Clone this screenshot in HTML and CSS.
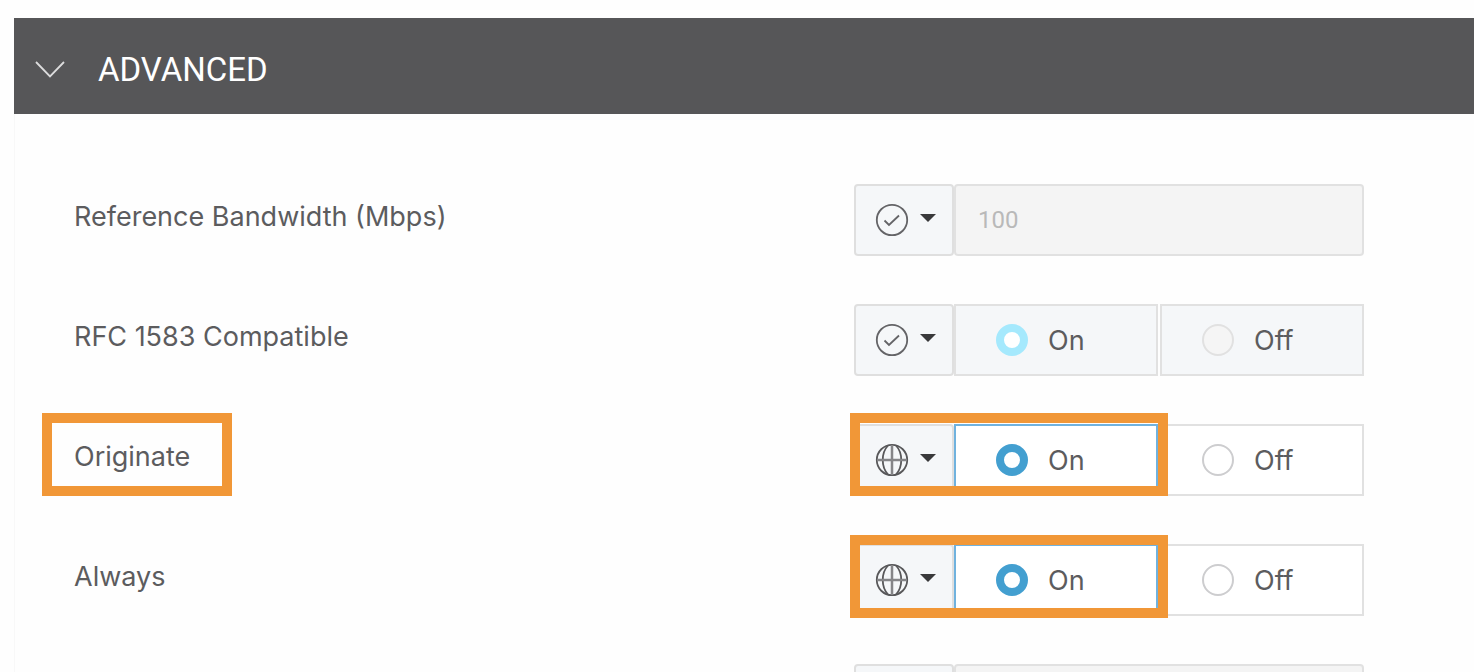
FILE: index.html
```html
<!DOCTYPE html>
<html lang="en">
<head>
<meta charset="utf-8">
<title>Advanced</title>
<link rel="stylesheet" href="styles.css">
</head>
<body>
<svg class="sprite" aria-hidden="true">
  <symbol id="check" viewBox="0 0 34 34">
    <circle cx="17" cy="17" r="15.200" fill="none" stroke="#646467" stroke-width="1.800"/>
    <path d="M9.500 17.500l4.500 4.500L24 12.500" fill="none" stroke="#646467" stroke-width="1.800"/>
  </symbol>
  <symbol id="globe" viewBox="0 0 34 34">
    <g fill="none" stroke="#58585a" stroke-width="1.800">
      <circle cx="17" cy="17" r="15.200"/>
      <path d="M13 2.500C6 10 6 24 13 31.500M21 2.500c7 7.500 7 21.500 0 29"/>
      <path d="M17 2v30M2 17h30" stroke="#858588" stroke-width="2.500"/>
    </g>
  </symbol>
  <symbol id="caret" viewBox="0 0 16 8">
    <path d="M0 0h16L8 8z" fill="#39393b"/>
  </symbol>
</svg>
<section class="panel">
  <header class="panel-header">
    <button class="toggle" type="button" aria-expanded="true">
      <svg class="chevron" viewBox="0 0 30 18"><path d="M1 2l14 14.500L29 2" fill="none" stroke="#dcdcdd" stroke-width="1.800"/></svg>
      <span>ADVANCED</span>
    </button>
  </header>
  <form class="rows">
    <div class="row">
      <div class="name"><label for="bandwidth">Reference Bandwidth (Mbps)</label></div>
      <div class="control">
        <button class="scope" type="button" aria-label="Default"><svg class="icon"><use href="#check"/></svg><svg class="caret"><use href="#caret"/></svg></button>
        <input class="field" id="bandwidth" type="text" value="100" disabled>
      </div>
    </div>
    <div class="row">
      <div class="name"><span id="rfc">RFC 1583 Compatible</span></div>
      <div class="control">
        <button class="scope" type="button" aria-label="Default"><svg class="icon"><use href="#check"/></svg><svg class="caret"><use href="#caret"/></svg></button>
        <div class="options" role="radiogroup" aria-labelledby="rfc">
          <label class="option disabled"><input type="radio" name="rfc" checked disabled>On</label>
          <label class="option disabled"><input type="radio" name="rfc" disabled>Off</label>
        </div>
      </div>
    </div>
    <div class="row">
      <div class="name"><span id="originate" class="marked">Originate</span></div>
      <div class="control marked-control">
        <button class="scope" type="button" aria-label="Global"><svg class="icon"><use href="#globe"/></svg><svg class="caret"><use href="#caret"/></svg></button>
        <div class="options" role="radiogroup" aria-labelledby="originate">
          <label class="option selected"><input type="radio" name="originate" checked>On</label>
          <label class="option"><input type="radio" name="originate">Off</label>
        </div>
      </div>
    </div>
    <div class="row">
      <div class="name"><span id="always">Always</span></div>
      <div class="control marked-control low">
        <button class="scope" type="button" aria-label="Global"><svg class="icon"><use href="#globe"/></svg><svg class="caret"><use href="#caret"/></svg></button>
        <div class="options" role="radiogroup" aria-labelledby="always">
          <label class="option selected"><input type="radio" name="always" checked>On</label>
          <label class="option"><input type="radio" name="always">Off</label>
        </div>
      </div>
    </div>
    <div class="row">
      <div class="name"></div>
      <div class="control">
        <button class="scope" type="button" aria-label="Default"></button>
        <input class="field" type="text" aria-label="Value" disabled>
      </div>
    </div>
  </form>
</section>
</body>
</html>
```
FILE: styles.css
```css
* {
  box-sizing: border-box;
}

body {
  margin: 0;
  height: 100vh;
  overflow: hidden;
  background: #fefefe;
  color: #5c5c5e;
  font-family: Inter, "Liberation Sans", sans-serif;
  font-size: 27px;
  font-weight: 400;
}

.sprite {
  position: absolute;
  width: 0;
  height: 0;
}

.panel {
  margin: 18px 0 0 14px;
  border-left: 1px solid #f8f8f8;
}

.panel-header {
  display: flex;
  margin-left: -1px;
  height: 96px;
  background: #565658;
}

.toggle {
  display: flex;
  align-items: center;
  gap: 33px;
  padding: 6px 21px 0;
  border: 0;
  background: none;
  color: #fff;
  font-family: Roboto, sans-serif;
  font-size: 33px;
  font-weight: 400;
}

.chevron {
  width: 30px;
  height: 18px;
}

.rows {
  display: flex;
  flex-direction: column;
  gap: 48px;
  padding: 70px 110px 48px 59px;
}

.row {
  display: flex;
  align-items: stretch;
  min-height: 72px;
}

.name {
  display: flex;
  flex: 1;
  align-items: center;
  padding-bottom: 8px;
}

.marked {
  position: relative;
}

.marked::before {
  content: "";
  position: absolute;
  inset: -27px -42px -23px -32px;
  border: 10px solid #f19737;
}

.control {
  position: relative;
  display: flex;
  flex: 0 1 510px;
}

.marked-control::after {
  content: "";
  position: absolute;
  inset: -11px 196px 0 -4px;
  border: 10px solid #f19737;
  pointer-events: none;
}

.low::after {
  inset: -9px 196px -2px -4px;
}

.scope {
  display: flex;
  flex: none;
  align-items: center;
  gap: 11px;
  width: 100px;
  padding: 0 0 0 19px;
  border: 2px solid #dfdfdf;
  border-radius: 4px;
  background: #f5f7f9;
}

.icon {
  width: 34px;
  height: 34px;
}

.caret {
  width: 16px;
  height: 8px;
  margin-bottom: 4px;
}

.field {
  flex: 1;
  min-width: 0;
  padding: 0 22px;
  border: 2px solid #e1e1e1;
  border-radius: 4px;
  background: #f4f4f4;
  color: #b9b9b9;
  font-family: Roboto, sans-serif;
  font-size: 24px;
}

.options {
  display: flex;
  flex: 1;
  gap: 2px;
}

.option {
  display: flex;
  flex: 1;
  align-items: center;
  gap: 20px;
  padding-left: 40px;
  border: 2px solid #e1e1e1;
  background: #fff;
}

.option.disabled {
  background: #f5f7f9;
}

.option.selected {
  border-color: #70b2de;
}

.option input {
  appearance: none;
  flex: none;
  width: 32px;
  height: 32px;
  margin: 0;
  border: 2px solid #cdcdcf;
  border-radius: 50%;
  background: #fff;
}

.option input:checked {
  border: 8px solid #439fd0;
}

.option input:disabled {
  border-color: #e1e1e1;
  background: #f5f5f5;
}

.option input:checked:disabled {
  border-color: #a5e9fd;
  background: #fff;
}
```
